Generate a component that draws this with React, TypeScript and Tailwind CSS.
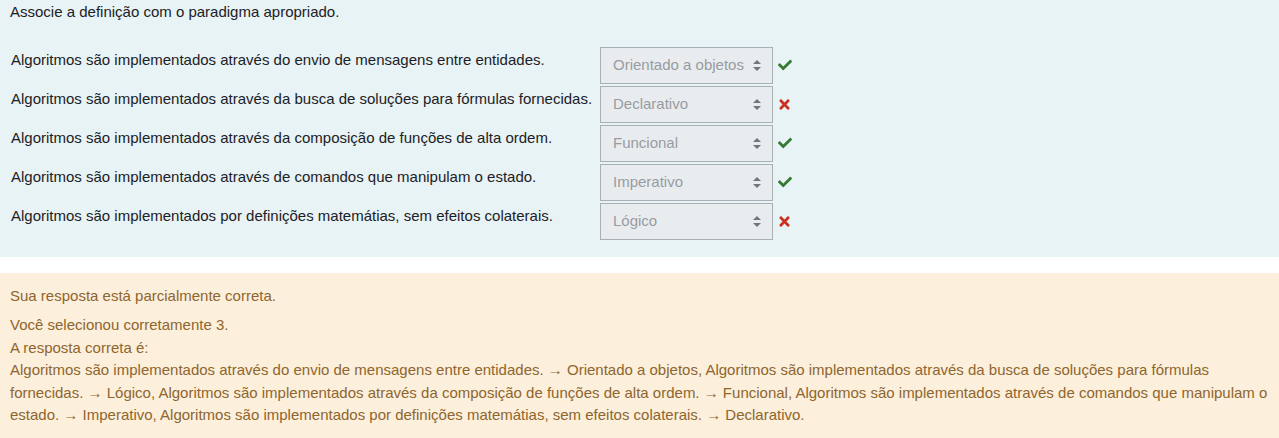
import { FaCheck, FaTimes } from "react-icons/fa";

const rows = [
  { text: "Algoritmos são implementados através do envio de mensagens entre entidades.", value: "Orientado a objetos", ok: true },
  { text: "Algoritmos são implementados através da busca de soluções para fórmulas fornecidas.", value: "Declarativo", ok: false },
  { text: "Algoritmos são implementados através da composição de funções de alta ordem.", value: "Funcional", ok: true },
  { text: "Algoritmos são implementados através de comandos que manipulam o estado.", value: "Imperativo", ok: true },
  { text: "Algoritmos são implementados por definições matemátias, sem efeitos colaterais.", value: "Lógico", ok: false },
];

function SelectBox({ value }: { value: string }) {
  return (
    <div className="flex h-[37px] w-[173px] items-center justify-between border border-[#a9afb5] bg-[#e9ecef] pl-[12px] pr-[11px] text-[15px] text-[#979ca2]">
      <span>{value}</span>
      <svg width="8" height="11" viewBox="0 0 8 11">
        <path d="M4 0 L8 4 L0 4 Z" fill="#6f767d" />
        <path d="M0 7 L8 7 L4 11 Z" fill="#6f767d" />
      </svg>
    </div>
  );
}

export default function App() {
  return (
    <div className="w-[1279px] bg-white font-['Liberation_Sans',Arial,sans-serif] text-[15px] leading-[22.5px] text-[#1d2125]">
      <div className="bg-[#e7f3f5] px-[10px] pb-[17px] pt-[1px]">
        <p>Associe a definição com o paradigma apropriado.</p>
        <div className="mt-[23px] flex flex-col gap-[2px]">
          {rows.map((r) => (
            <div key={r.value} className="flex items-start">
              <div className="w-[590px] pl-[1px] pt-[2px]">{r.text}</div>
              <SelectBox value={r.value} />
              <div className="flex h-[37px] items-center pl-[5px]">
                {r.ok ? (
                  <FaCheck className="h-[14px] w-[14px] text-[#357a32]" />
                ) : (
                  <FaTimes className="h-[15px] w-[13px] text-[#ca3120]" />
                )}
              </div>
            </div>
          ))}
        </div>
      </div>
      <div className="h-[16px]" />
      <div className="bg-[#fcefdc] px-[10px] pb-[14px] pt-[12px] text-[#8e662e]">
        <p className="mb-[7px]">Sua resposta está parcialmente correta.</p>
        <p>Você selecionou corretamente 3.</p>
        <p>A resposta correta é:</p>
        <p>
          Algoritmos são implementados através do envio de mensagens entre entidades. → Orientado a objetos, Algoritmos são
          implementados através da busca de soluções para fórmulas fornecidas. → Lógico, Algoritmos são implementados através
          da composição de funções de alta ordem. → Funcional, Algoritmos são implementados através de comandos que manipulam o
          estado. → Imperativo, Algoritmos são implementados por definições matemátias, sem efeitos colaterais. → Declarativo.
        </p>
      </div>
    </div>
  );
}
